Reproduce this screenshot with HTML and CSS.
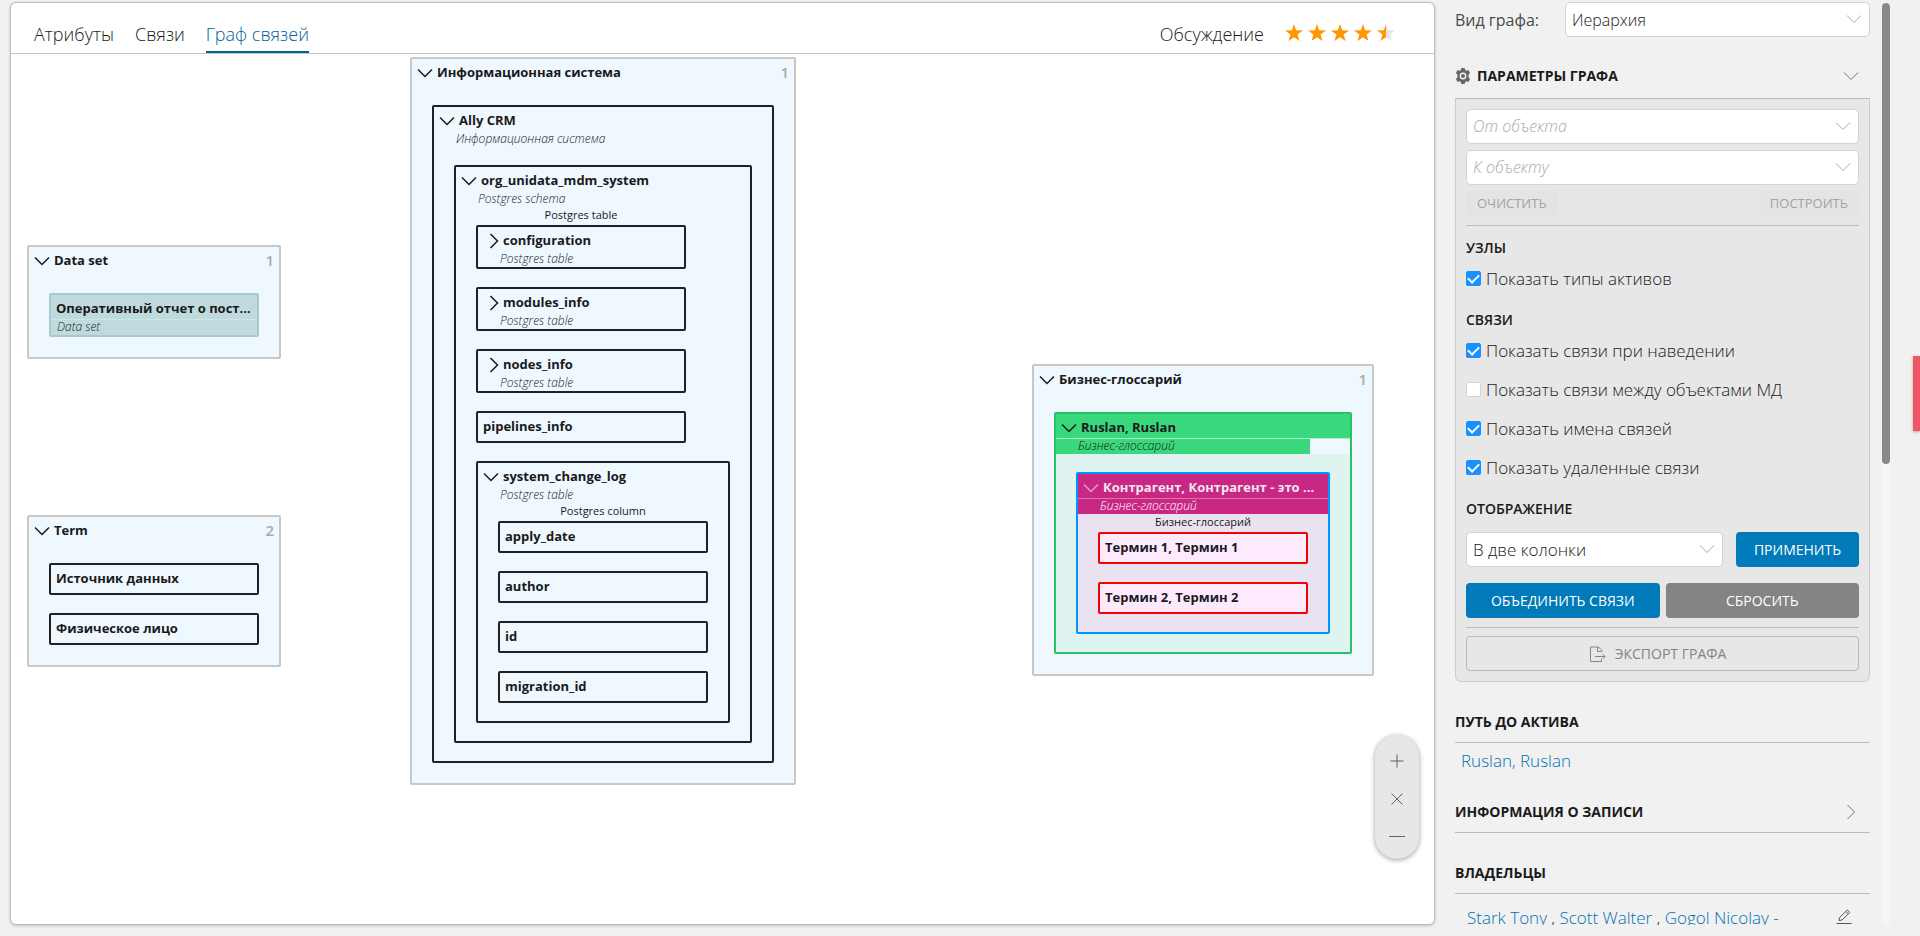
FILE: index.html
```html
<!DOCTYPE html>
<html lang="ru">
<head>
<meta charset="utf-8">
<title>Граф связей</title>
<link rel="stylesheet" href="styles.css">
</head>
<body>
<svg class="sprite" aria-hidden="true">
  <symbol id="down" viewBox="0 0 16 16"><path d="M1 4.500 8 11.500 15 4.500"/></symbol>
  <symbol id="right" viewBox="0 0 16 16"><path d="M4.500 1 11.500 8 4.500 15"/></symbol>
  <symbol id="star" viewBox="0 0 18 18"><path d="M9 0 11.200 6.200 18 6.400 12.600 10.500 14.500 17 9 13.200 3.500 17 5.400 10.500 0 6.400 6.800 6.200Z"/></symbol>
</svg>

<main class="card">
  <header class="card-head">
    <nav class="tabs">
      <a class="tab" href="#attributes">Атрибуты</a>
      <a class="tab" href="#relations">Связи</a>
      <a class="tab tab-active" href="#graph">Граф связей</a>
    </nav>
    <a class="tab discuss" href="#discussion">Обсуждение</a>
    <div class="stars" role="img" aria-label="4,5 из 5">
      <svg class="star"><use href="#star"/></svg>
      <svg class="star"><use href="#star"/></svg>
      <svg class="star"><use href="#star"/></svg>
      <svg class="star"><use href="#star"/></svg>
      <svg class="star" viewBox="0 0 18 18"><path class="star-off" d="M9 0 11.200 6.200 18 6.400 12.600 10.500 14.500 17 9 13.200Z"/><path d="M9 0 9 13.200 3.500 17 5.400 10.500 0 6.400 6.800 6.200Z"/></svg>
    </div>
  </header>

  <div class="canvas">
    <section class="group group-dataset">
      <div class="group-head"><button class="caret" aria-label="Свернуть"><svg><use href="#down"/></svg></button><h2 class="title">Data set</h2><span class="count">1</span></div>
      <div class="leaf leaf-tall leaf-teal"><div class="node-title"><span class="title">Оперативный отчет о пост...</span></div><div class="node-type">Data set</div></div>
    </section>

    <section class="group group-term">
      <div class="group-head"><button class="caret" aria-label="Свернуть"><svg><use href="#down"/></svg></button><h2 class="title">Term</h2><span class="count">2</span></div>
      <div class="leaf"><div class="node-title"><span class="title">Источник данных</span></div></div>
      <div class="leaf"><div class="node-title"><span class="title">Физическое лицо</span></div></div>
    </section>

    <section class="group group-system">
      <div class="group-head"><button class="caret" aria-label="Свернуть"><svg><use href="#down"/></svg></button><h2 class="title">Информационная система</h2><span class="count">1</span></div>
      <div class="node">
        <div class="node-title"><button class="caret" aria-label="Свернуть"><svg><use href="#down"/></svg></button><span class="title">Ally CRM</span></div>
        <div class="node-type">Информационная система</div>
        <div class="node-body">
          <div class="node">
            <div class="node-title"><button class="caret" aria-label="Свернуть"><svg><use href="#down"/></svg></button><span class="title">org_unidata_mdm_system</span></div>
            <div class="node-type">Postgres schema</div>
            <div class="node-body">
              <div class="kind">Postgres table</div>
              <div class="leaf leaf-tall leaf-closed"><div class="node-title"><button class="caret" aria-label="Развернуть"><svg><use href="#right"/></svg></button><span class="title">configuration</span></div><div class="node-type">Postgres table</div></div>
              <div class="leaf leaf-tall leaf-closed"><div class="node-title"><button class="caret" aria-label="Развернуть"><svg><use href="#right"/></svg></button><span class="title">modules_info</span></div><div class="node-type">Postgres table</div></div>
              <div class="leaf leaf-tall leaf-closed"><div class="node-title"><button class="caret" aria-label="Развернуть"><svg><use href="#right"/></svg></button><span class="title">nodes_info</span></div><div class="node-type">Postgres table</div></div>
              <div class="leaf"><div class="node-title"><span class="title">pipelines_info</span></div></div>
              <div class="node">
                <div class="node-title"><button class="caret" aria-label="Свернуть"><svg><use href="#down"/></svg></button><span class="title">system_change_log</span></div>
                <div class="node-type">Postgres table</div>
                <div class="node-body">
                  <div class="kind">Postgres column</div>
                  <div class="leaf"><div class="node-title"><span class="title">apply_date</span></div></div>
                  <div class="leaf"><div class="node-title"><span class="title">author</span></div></div>
                  <div class="leaf"><div class="node-title"><span class="title">id</span></div></div>
                  <div class="leaf"><div class="node-title"><span class="title">migration_id</span></div></div>
                </div>
              </div>
            </div>
          </div>
        </div>
      </div>
    </section>

    <section class="group group-glossary">
      <div class="group-head"><button class="caret" aria-label="Свернуть"><svg><use href="#down"/></svg></button><h2 class="title">Бизнес-глоссарий</h2><span class="count">1</span></div>
      <div class="node node-green">
        <div class="node-title"><button class="caret" aria-label="Свернуть"><svg><use href="#down"/></svg></button><span class="title">Ruslan, Ruslan</span></div>
        <div class="node-type">Бизнес-глоссарий</div>
        <div class="node-body">
          <div class="node node-pink">
            <div class="node-title"><button class="caret" aria-label="Свернуть"><svg><use href="#down"/></svg></button><span class="title">Контрагент, Контрагент - это ...</span></div>
            <div class="node-type">Бизнес-глоссарий</div>
            <div class="node-body">
              <div class="kind">Бизнес-глоссарий</div>
              <div class="leaf leaf-red"><div class="node-title"><span class="title">Термин 1, Термин 1</span></div></div>
              <div class="leaf leaf-red"><div class="node-title"><span class="title">Термин 2, Термин 2</span></div></div>
            </div>
          </div>
        </div>
      </div>
    </section>

    <div class="zoom">
      <button class="zoom-btn" aria-label="Увеличить"><svg viewBox="0 0 16 16"><path d="M8 1.500V14.500M1.500 8H14.500"/></svg></button>
      <button class="zoom-btn" aria-label="По размеру"><svg viewBox="0 0 16 16"><path d="M2.500 2.500 13.500 13.500M13.500 2.500 2.500 13.500"/></svg></button>
      <button class="zoom-btn" aria-label="Уменьшить"><svg viewBox="0 0 16 16"><path d="M0 7.500H16"/></svg></button>
    </div>
  </div>
</main>

<aside class="side">
  <div class="view-row">
    <label class="view-label" for="view">Вид графа:</label>
    <div class="field"><select class="input" id="view"><option>Иерархия</option></select><svg class="field-caret"><use href="#down"/></svg></div>
  </div>

  <div class="params-head">
    <svg class="gear" viewBox="0 0 16 16"><path fill-rule="evenodd" d="M6.300 0h3.400l.4 2 1.300.8 2-.7 1.700 2.900-1.500 1.400v3.200l1.500 1.400-1.700 2.900-2-.7-1.300.8-.4 2H6.300l-.4-2-1.300-.8-2 .7L.900 11l1.500-1.400V6.400L.900 5l1.700-2.900 2 .7L5.900 2ZM8 4.600a3.400 3.400 0 1 0 0 6.800 3.400 3.400 0 0 0 0-6.800ZM8 6a2 2 0 1 1 0 4 2 2 0 0 1 0-4Z"/></svg>
    <h3 class="side-title">ПАРАМЕТРЫ ГРАФА</h3>
    <button class="fold" aria-label="Свернуть"><svg><use href="#down"/></svg></button>
  </div>

  <form class="panel">
    <div class="field"><input class="input" type="text" placeholder="От объекта" aria-label="От объекта"><svg class="field-caret"><use href="#down"/></svg></div>
    <div class="field"><input class="input" type="text" placeholder="К объекту" aria-label="К объекту"><svg class="field-caret"><use href="#down"/></svg></div>
    <div class="ghost-row">
      <button class="ghost" type="button" disabled>ОЧИСТИТЬ</button>
      <button class="ghost" type="button" disabled>ПОСТРОИТЬ</button>
    </div>
    <hr class="rule">

    <h4 class="legend">УЗЛЫ</h4>
    <label class="check"><input type="checkbox" checked>Показать типы активов</label>

    <h4 class="legend">СВЯЗИ</h4>
    <label class="check"><input type="checkbox" checked>Показать связи при наведении</label>
    <label class="check"><input type="checkbox">Показать связи между объектами МД</label>
    <label class="check"><input type="checkbox" checked>Показать имена связей</label>
    <label class="check"><input type="checkbox" checked>Показать удаленные связи</label>

    <h4 class="legend">ОТОБРАЖЕНИЕ</h4>
    <div class="apply-row">
      <div class="field"><select class="input input-large" aria-label="Отображение"><option>В две колонки</option></select><svg class="field-caret"><use href="#down"/></svg></div>
      <button class="btn btn-blue" type="button">ПРИМЕНИТЬ</button>
    </div>
    <div class="pair-row">
      <button class="btn btn-blue" type="button">ОБЪЕДИНИТЬ СВЯЗИ</button>
      <button class="btn btn-gray" type="button">СБРОСИТЬ</button>
    </div>
    <hr class="rule">
    <button class="btn btn-line" type="button"><svg viewBox="0 0 17 16"><path d="M13 5.500V4.500L9.500 1H1.500V15.500H12.500V13M8.500 1V5.500H13M6 10.500H16M13.500 8 16 10.500 13.500 13"/></svg>ЭКСПОРТ ГРАФА</button>
  </form>

  <section class="block">
    <div class="block-head"><h3 class="side-title">ПУТЬ ДО АКТИВА</h3></div>
    <a class="path-link" href="#ruslan">Ruslan, Ruslan</a>
  </section>
  <section class="block">
    <div class="block-head"><h3 class="side-title">ИНФОРМАЦИЯ О ЗАПИСИ</h3><button class="fold" aria-label="Развернуть"><svg><use href="#right"/></svg></button></div>
  </section>
  <section class="block">
    <div class="block-head"><h3 class="side-title">ВЛАДЕЛЬЦЫ</h3></div>
    <div class="owners">
      <p class="owner-list"><a href="#stark">Stark Tony</a> , <a href="#scott">Scott Walter</a> , <a href="#gogol">Gogol Nicolay -</a></p>
      <button class="edit" aria-label="Редактировать"><svg viewBox="0 0 16 16"><path d="M3 12.500 3.600 9.500 11.300 2 13.800 4.400 6 12ZM10 3.500 12.400 5.900M0.500 15.500H15.500"/></svg></button>
    </div>
  </section>
</aside>
<div class="track"><div class="thumb"></div></div>
<button class="flag" aria-label="Обратная связь"></button>
</body>
</html>
```

FILE: styles.css
```css
* { box-sizing: border-box; }

body {
  margin: 0;
  height: 100vh;
  display: flex;
  padding: 2px 30px 11px 10px;
  overflow: hidden;
  background: #f1f1f1;
  color: #1a1a1a;
  font: 300 16px/20px "Open Sans", "Noto Sans", sans-serif;
}

h2, h3, h4, p { margin: 0; }
a { color: inherit; text-decoration: none; }
button { font: inherit; color: inherit; border: 0; padding: 0; background: none; }
svg { display: block; width: 16px; height: 16px; fill: none; stroke: currentColor; }
.sprite { position: absolute; width: 0; height: 0; }

/* Main card */
.card {
  flex: 1;
  min-width: 0;
  display: flex;
  flex-direction: column;
  background: #fff;
  border: 1px solid #bdbdbd;
  border-radius: 6px;
  box-shadow: 0 1px 3px rgba(0, 0, 0, .2);
}
.card-head {
  display: flex;
  align-items: flex-end;
  height: 51px;
  padding: 0 39px 0 23px;
  border-bottom: 1px solid #c4c4c4;
}
.tabs { display: flex; gap: 21px; flex: 1; }
.tab { font-size: 18px; line-height: 24px; padding-bottom: 5px; border-bottom: 2px solid transparent; }
.tab-active { color: #006297; border-color: #006297; }
.discuss { margin-right: 21px; }
.stars { display: flex; gap: 5px; padding-bottom: 11px; }
.star { width: 18px; height: 18px; fill: #ff9800; stroke: none; }
.star-off { fill: #e4e4e4; }

/* Graph */
.canvas { position: relative; flex: 1; }
.title { font-size: 13px; font-weight: 700; line-height: 20px; white-space: nowrap; }
.group {
  position: absolute;
  display: flex;
  flex-direction: column;
  gap: 18px;
  padding: 0 20px 20px;
  background: #eff7ff;
  border: 2px solid #c8c8c8;
  border-radius: 2px;
}
.group-dataset { left: 16px; top: 191px; }
.group-term { left: 16px; top: 461px; }
.group-system { left: 399px; top: 3px; }
.group-glossary { left: 1021px; top: 310px; }
.group-head { display: flex; height: 28px; margin: 0 -15px; padding-top: 3px; }
.count { margin-left: auto; font-size: 15px; font-weight: 600; color: #aaa; }
.caret { width: 16px; height: 16px; margin: 3px 4px 0 0; }
.caret svg { stroke-width: 1.5; }

.node, .leaf { border: 2px solid #212121; border-radius: 2px; }
.node-title { display: flex; height: 24px; padding: 3px 5px 0; }
.node-type { font-size: 12px; font-style: italic; line-height: 13px; height: 16px; padding-left: 22px; border-top: 1px solid transparent; }
.node-body { position: relative; display: flex; flex-direction: column; gap: 18px; padding: 18px 20px; }
.kind { position: absolute; top: 0; left: 20px; width: 210px; font-size: 11px; font-weight: 400; line-height: 16px; text-align: center; }
.leaf { width: 210px; height: 32px; }
.leaf-tall { height: 44px; }
.leaf-closed .caret { margin-left: 3px; margin-right: 1px; }

.leaf-teal { background: #bfdadd; border-color: #a9c9cc; }
.leaf-teal .node-type { padding-left: 6px; border-color: #cfe6e8; }

.node-green { background: #dff4f0; border-color: #26c264; }
.node-green > .node-title { background: #39d87c; }
.node-green > .node-type { background: linear-gradient(#39d87c, #39d87c) 0 0 / calc(100% - 40px) 100% no-repeat #eff7ff; border-color: #b0efcb; }
.node-pink { background: #ebe2f1; border-color: #0094ff; }
.node-pink > .node-title { background: #c82883; color: #f3e6ee; }
.node-pink > .node-title .caret { color: #dca0c4; }
.node-pink > .node-type { background: #c82883; color: #fff; border-color: #db74af; }
.leaf-red { background: #fdeaff; border-color: #f80000; }

.zoom {
  position: absolute;
  right: 15px;
  bottom: 65px;
  display: flex;
  flex-direction: column;
  align-items: center;
  gap: 22px;
  padding: 18px 14px 14px;
  background: #e7e7e7;
  border-radius: 23px;
  box-shadow: 0 1px 5px rgba(0, 0, 0, .4);
  color: #616161;
}

/* Sidebar */
.side { width: 415px; margin-left: 20px; overflow: hidden; }
.view-row { display: flex; align-items: center; }
.view-label { width: 110px; font-weight: 400; color: #4a4a4a; }
.field { position: relative; flex: 1; min-width: 0; }
.input {
  display: block;
  width: 100%;
  height: 35px;
  padding: 0 30px 0 6px;
  appearance: none;
  font: inherit;
  color: #1a1a1a;
  background: #fff;
  border: 1px solid #d2d2d2;
  border-radius: 5px;
}
.input-large { font-size: 17px; }
.input::placeholder { color: #aaa; font-style: italic; }
.field-caret { position: absolute; right: 8px; top: 9px; color: #a8a8a8; pointer-events: none; }

.side-title { flex: 1; font-size: 14px; font-weight: 700; line-height: 20px; }
.fold { width: 16px; height: 16px; margin-right: 11px; color: #757575; }
.params-head { display: flex; align-items: center; height: 40px; margin-top: 19px; }
.gear { margin-right: 6px; fill: #666; stroke: none; }

.panel {
  display: flex;
  flex-direction: column;
  margin-top: 2px;
  padding: 10px;
  background: #e7e7e7;
  border: 1px solid #cdcdcd;
  border-top-color: #b8b8b8;
  border-radius: 0 0 6px 6px;
}
.panel > .field { flex: none; margin-bottom: 6px; }
.panel > .field .input { padding-bottom: 2px; }
.ghost-row { display: flex; justify-content: space-between; }
.ghost { height: 25px; padding: 0 11px 1px; font-size: 13px; font-weight: 400; color: #a3a3a3; background: #e4e4e4; border-radius: 4px; }
.rule { width: 100%; height: 1px; margin: 9px 0 8px; border: 0; background: #bdbdbd; }
.legend { font-size: 14px; font-weight: 600; line-height: 20px; margin: 4px 0 7px; }
.check { display: flex; align-items: center; gap: 5px; height: 27px; margin-bottom: 12px; font-size: 17px; }
.check + .legend { margin-top: 6px; }
.check input {
  appearance: none;
  display: flex;
  justify-content: center;
  width: 15px;
  height: 15px;
  margin: 0;
  background: #fff;
  border: 1px solid #d6d6d6;
  border-radius: 2px;
}
.check input:checked { background: #1890ff; border-color: #1890ff; }
.check input:checked::after { content: ""; width: 5px; height: 9px; border: solid #fff; border-width: 0 2px 2px 0; transform: rotate(45deg); }

.btn { height: 35px; font-size: 14px; font-weight: 400; border-radius: 4px; color: #fff; }
.btn-blue { background: #007ab8; }
.btn-gray { background: #848484; }
.apply-row { display: grid; grid-template-columns: 257px 1fr; gap: 13px; margin-top: 6px; }
.pair-row { display: grid; grid-template-columns: 1fr 1fr; gap: 6px; margin-top: 16px; }
.btn-line { display: flex; align-items: center; justify-content: center; gap: 9px; padding-right: 10px; color: #848484; border: 1px solid #b8b8b8; }
.btn-line svg { width: 17px; }

.block-head { display: flex; align-items: center; height: 41px; border-bottom: 1px solid #bdbdbd; }
.block { margin-top: 20px; }
.path-link { display: block; padding: 8px 6px 0; height: 29px; font-size: 17px; color: #0071b0; }
.owners { display: flex; align-items: flex-start; justify-content: space-between; padding: 14px 18px 0 12px; font-size: 17px; white-space: nowrap; }
.owners a { color: #0071b0; }
.edit { width: 16px; height: 16px; color: #555; }

.track { width: 8px; margin: 0 0 0 12px; padding-top: 1px; background: #f6f6f6; border-radius: 4px; }
.thumb { height: 50%; background: #888; border-radius: 4px; }
.flag { position: absolute; right: 0; top: 38%; width: 7px; height: 75px; background: #ee5565; box-shadow: 0 1px 3px rgba(0, 0, 0, .3); }
```
